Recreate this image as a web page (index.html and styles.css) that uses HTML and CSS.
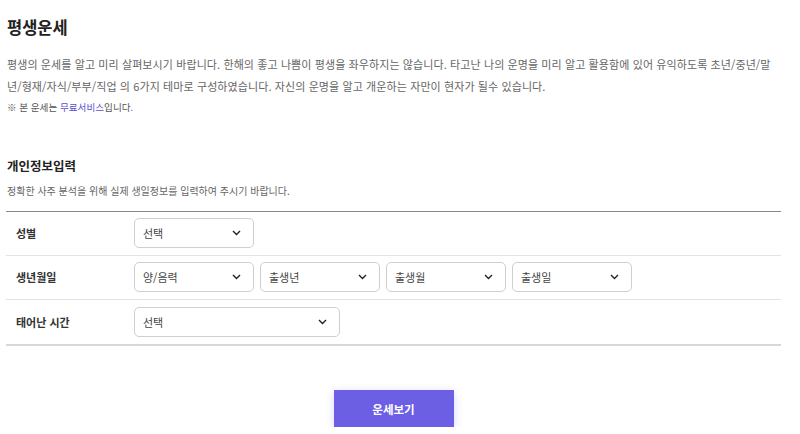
FILE: index.html
```html
<!DOCTYPE html>
<html lang="ko">
<head>
<meta charset="utf-8">
<title>평생운세</title>
<link rel="stylesheet" href="styles.css">
</head>
<body>
<div class="page">
  <h1 class="title">평생운세</h1>
  <p class="intro">평생의 운세를 알고 미리 살펴보시기 바랍니다. 한해의 좋고 나쁨이 평생을 좌우하지는 않습니다. 타고난 나의 운명을 미리 알고 활용함에 있어 유익하도록 초년/중년/말년/형재/자식/부부/직업 의 6가지 테마로 구성하였습니다. 자신의 운명을 알고 개운하는 자만이 현자가 될수 있습니다.</p>
  <p class="note">※ 본 운세는 <span class="free">무료서비스</span>입니다.</p>

  <h2 class="section-title">개인정보입력</h2>
  <p class="section-desc">정확한 사주 분석을 위해 실제 생일정보를 입력하여 주시기 바랍니다.</p>

  <div class="form">
    <div class="row">
      <div class="label">성별</div>
      <div class="fields">
        <div class="select">
          <span>선택</span>
          <svg class="chev" width="9" height="6" viewBox="0 0 9 6"><path d="M1 1l3.5 3.5L8 1" fill="none" stroke="#222" stroke-width="1.4"/></svg>
        </div>
      </div>
    </div>
    <div class="row">
      <div class="label">생년월일</div>
      <div class="fields">
        <div class="select">
          <span>양/음력</span>
          <svg class="chev" width="9" height="6" viewBox="0 0 9 6"><path d="M1 1l3.5 3.5L8 1" fill="none" stroke="#222" stroke-width="1.4"/></svg>
        </div>
        <div class="select">
          <span>출생년</span>
          <svg class="chev" width="9" height="6" viewBox="0 0 9 6"><path d="M1 1l3.5 3.5L8 1" fill="none" stroke="#222" stroke-width="1.4"/></svg>
        </div>
        <div class="select">
          <span>출생월</span>
          <svg class="chev" width="9" height="6" viewBox="0 0 9 6"><path d="M1 1l3.5 3.5L8 1" fill="none" stroke="#222" stroke-width="1.4"/></svg>
        </div>
        <div class="select">
          <span>출생일</span>
          <svg class="chev" width="9" height="6" viewBox="0 0 9 6"><path d="M1 1l3.5 3.5L8 1" fill="none" stroke="#222" stroke-width="1.4"/></svg>
        </div>
      </div>
    </div>
    <div class="row last">
      <div class="label">태어난 시간</div>
      <div class="fields">
        <div class="select wide">
          <span>선택</span>
          <svg class="chev" width="9" height="6" viewBox="0 0 9 6"><path d="M1 1l3.5 3.5L8 1" fill="none" stroke="#222" stroke-width="1.4"/></svg>
        </div>
      </div>
    </div>
  </div>

  <div class="actions">
    <button class="btn">운세보기</button>
  </div>
</div>
</body>
</html>
```

FILE: styles.css
```css
* { box-sizing: border-box; }
html, body { margin: 0; padding: 0; background: #fff; }
body {
  font-family: "Noto Sans CJK KR", "Noto Sans", sans-serif;
  color: #333;
}
.page {
  width: 775px;
  margin-left: 6px;
  padding-top: 15px;
}
.title {
  margin: 0;
  font-size: 16.5px;
  line-height: 24px;
  font-weight: 700;
  color: #222;
  padding-left: 1px;
}
.intro {
  margin: 14px 0 0;
  font-size: 11px;
  letter-spacing: 0.1px;
  line-height: 22px;
  color: #666;
  padding-left: 1px;
}
.note {
  margin: 2px 0 0;
  font-size: 9.6px;
  line-height: 16px;
  color: #555;
  padding-left: 1px;
}
.free { color: #5a4fcf; }
.section-title {
  margin: 42px 0 0;
  font-size: 12.5px;
  line-height: 18px;
  font-weight: 700;
  color: #222;
  padding-left: 1px;
}
.section-desc {
  margin: 8px 0 0;
  font-size: 10px;
  line-height: 16px;
  color: #666;
  padding-left: 1px;
}
.form {
  margin-top: 12px;
  border-top: 1px solid #8a8a8a;
}
.row {
  display: flex;
  align-items: center;
  padding: 6px 0 7px;
  border-bottom: 1px solid #e3e3e3;
}
.row.last {
  border-bottom: 2px solid #d8d8d8;
  padding-top: 7px;
}
.label {
  width: 128px;
  padding-left: 10px;
  font-size: 11px;
  font-weight: 700;
  color: #333;
}
.fields {
  display: flex;
  gap: 6px;
}
.select {
  width: 120px;
  height: 30px;
  border: 1px solid #cfcfcf;
  border-radius: 5px;
  background: #fff;
  display: flex;
  align-items: center;
  justify-content: space-between;
  padding: 0 12px 0 8px;
  font-size: 11px;
  color: #444;
}
.select.wide { width: 206px; }
.chev { display: block; }
.actions {
  display: flex;
  justify-content: center;
  margin-top: 44px;
}
.btn {
  width: 120px;
  height: 37px;
  border: none;
  background: #6c5fe4;
  color: #fff;
  font-family: "Noto Sans CJK KR", "Noto Sans", sans-serif;
  font-size: 11.5px;
  font-weight: 700;
  box-shadow: 0 2px 8px rgba(108, 95, 228, 0.25);
  cursor: pointer;
}
```
